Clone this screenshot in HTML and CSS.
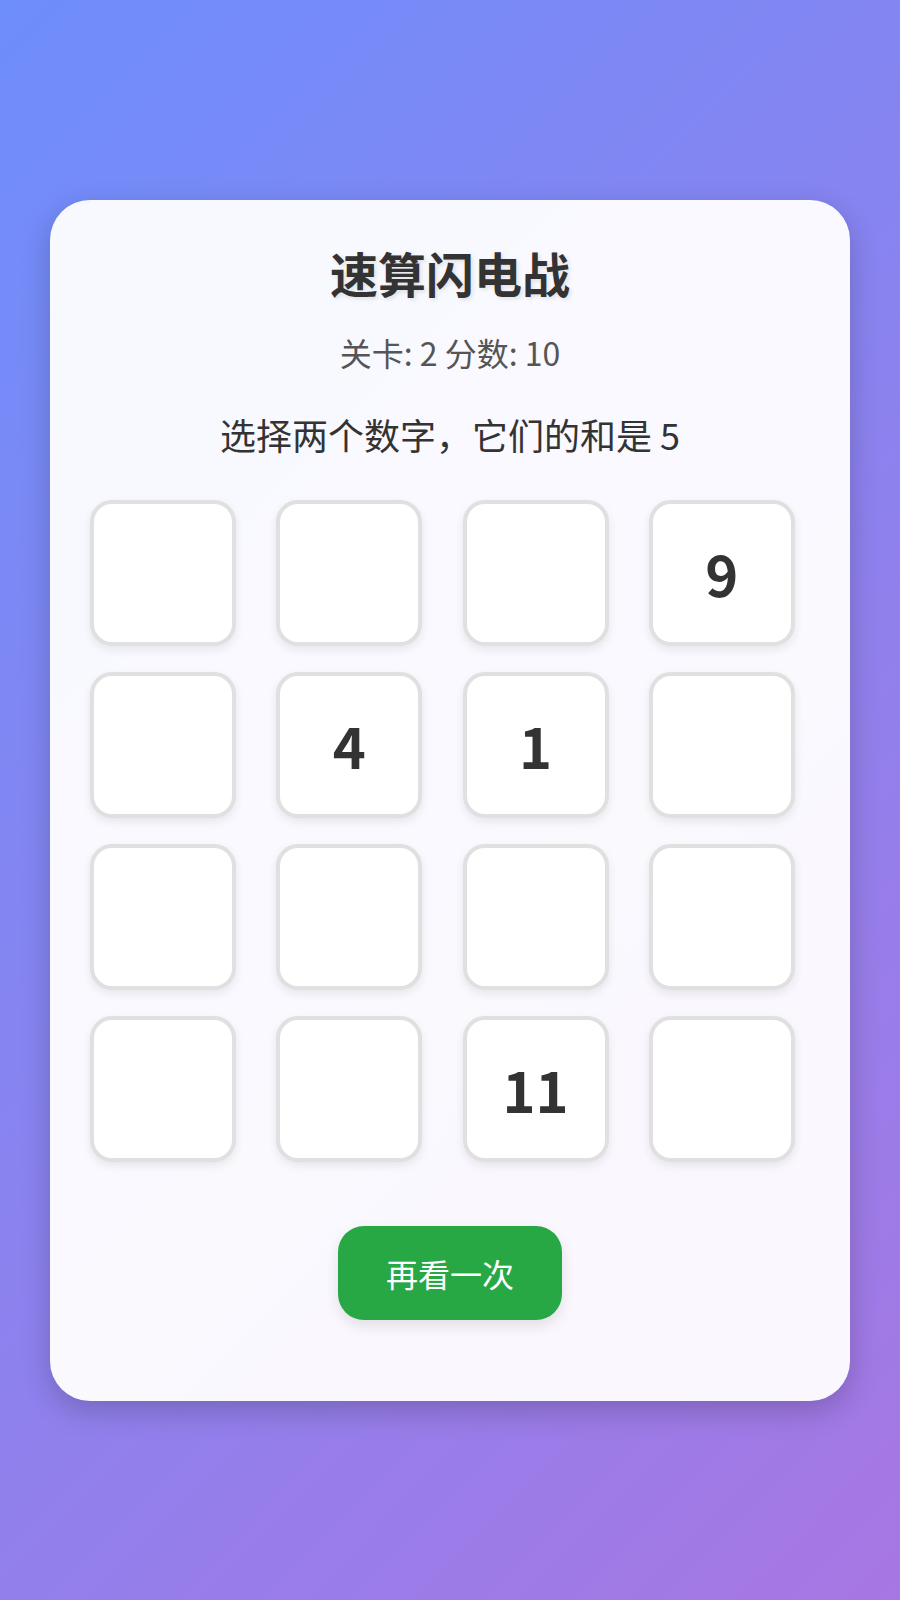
FILE: index.html
```html
<!DOCTYPE html>
<html lang="zh-CN">
<head>
  <meta charset="UTF-8">
  <title>速算闪电战</title>
  <link rel="stylesheet" href="styles.css">
</head>
<body>
  <div class="game-card">
    <h1 class="game-title">速算闪电战</h1>
    <div class="game-stats">关卡: 2 分数: 10</div>
    <div class="game-prompt">选择两个数字，它们的和是 5</div>

    <div class="number-grid">
      <div class="number-cell"></div>
      <div class="number-cell"></div>
      <div class="number-cell"></div>
      <div class="number-cell">9</div>

      <div class="number-cell"></div>
      <div class="number-cell">4</div>
      <div class="number-cell">1</div>
      <div class="number-cell"></div>

      <div class="number-cell"></div>
      <div class="number-cell"></div>
      <div class="number-cell"></div>
      <div class="number-cell"></div>

      <div class="number-cell"></div>
      <div class="number-cell"></div>
      <div class="number-cell">11</div>
      <div class="number-cell"></div>
    </div>

    <div class="actions">
      <button class="replay-button">再看一次</button>
    </div>
  </div>
</body>
</html>
```

FILE: styles.css
```css
:root {
  --text-color: #333333;
  --muted-color: #555555;
  --cell-border: #e0e0e0;
  --button-color: #28a745;
}

html, body {
  margin: 0;
  padding: 0;
}

body {
  font-family: "Noto Sans CJK SC", "Noto Sans", sans-serif;
  min-height: 100vh;
  display: flex;
  align-items: center;
  justify-content: center;
  background: linear-gradient(135deg, #6e8efb, #a777e3);
  color: var(--text-color);
}

.game-card {
  width: 800px;
  box-sizing: border-box;
  padding: 40px;
  background-color: rgba(255, 255, 255, 0.95);
  border-radius: 40px;
  box-shadow: 0 10px 30px rgba(0, 0, 0, 0.2);
  text-align: center;
}

.game-title {
  margin: 0 0 25px;
  font-size: 48px;
  line-height: 64px;
  font-weight: 700;
  color: var(--text-color);
  text-shadow: 2px 2px 4px rgba(0, 0, 0, 0.1);
}

.game-stats {
  font-size: 32px;
  line-height: 46px;
  color: var(--muted-color);
  margin-bottom: 33px;
}

.game-prompt {
  font-size: 36px;
  line-height: 52px;
  color: var(--text-color);
  margin-bottom: 40px;
}

.number-grid {
  display: grid;
  grid-template-columns: repeat(4, 1fr);
  column-gap: 25px;
  row-gap: 26px;
}

.number-cell {
  width: 146px;
  height: 146px;
  box-sizing: border-box;
  display: flex;
  align-items: center;
  justify-content: center;
  background-color: #ffffff;
  border: 4px solid var(--cell-border);
  border-radius: 22px;
  box-shadow: 0 4px 10px rgba(0, 0, 0, 0.08);
  font-size: 56px;
  font-weight: 700;
  color: var(--text-color);
}

.actions {
  margin: 64px 0 41px;
  display: flex;
  justify-content: center;
}

.replay-button {
  font-family: inherit;
  font-size: 32px;
  line-height: 46px;
  padding: 24px 48px;
  border: none;
  border-radius: 26px;
  background-color: var(--button-color);
  color: #ffffff;
  box-shadow: 0 6px 14px rgba(0, 0, 0, 0.1);
  cursor: pointer;
}
```
